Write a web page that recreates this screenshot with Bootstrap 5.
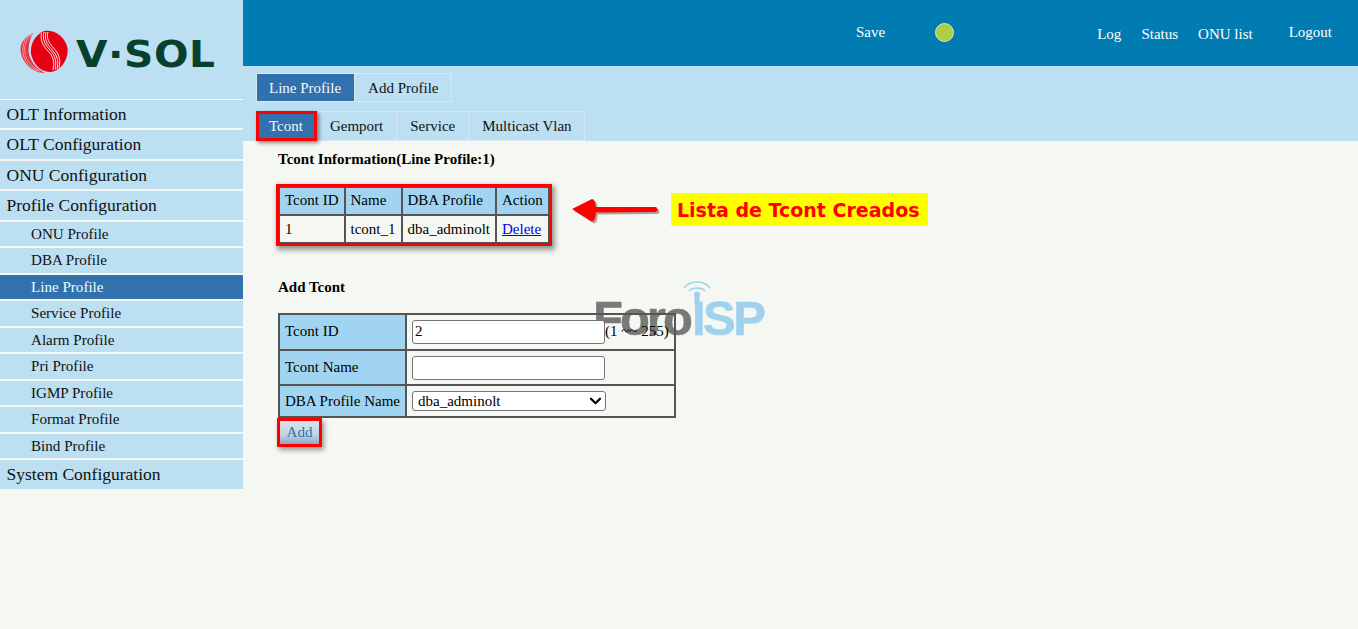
<!DOCTYPE html>
<html lang="en">
<head>
  <meta charset="UTF-8" />
  <meta name="viewport" content="width=device-width, initial-scale=1" />
  <title>V-SOL OLT - Line Profile</title>
  <link href="https://cdn.jsdelivr.net/npm/bootstrap@5.3.0/dist/css/bootstrap.min.css" rel="stylesheet" />
  <style>
    html, body { height: 100%; }
    body {
      background: #f5f8f2;
      font-family: "Liberation Serif", "Times New Roman", serif;
      font-size: 15px;
      color: #000;
      overflow: hidden;
    }
    .side-col { width: 243px; flex: none; }
    .logo-box {
      height: 98.7px;
      background: #bcdff2;
      padding: 30px 0 0 20px;
      gap: 8px;
    }
    .logo-name {
      font-family: "DejaVu Sans", sans-serif;
      font-weight: 700;
      font-size: 36px;
      line-height: 36px;
      color: #07402c;
      letter-spacing: 0.5px;
      display: inline-block;
      margin-top: 6px;
      transform: scale(1.13, 1.06);
      transform-origin: left center;
    }
    .side-menu { border-top: 1px solid #fff; width: 244px; }
    .side-item {
      display: block;
      width: 243px;
      background: #bcdff2;
      color: #111;
      text-decoration: none;
      margin-bottom: 2px;
    }
    .side-main { font-size: 17.5px; height: 28.5px; line-height: 29px; padding-left: 6.5px; }
    .side-sub { font-size: 15.1px; height: 24.5px; line-height: 24px; padding-left: 31px; }
    .side-sub.is-on { background: #3071ae; color: #f2f7fb; }
    .side-main:last-child { margin-bottom: 0; }
    .top-bar {
      height: 66px;
      background: #017cb2;
      color: #fff;
      padding: 0 26px 2px 0;
    }
    .top-bar span { white-space: nowrap; }
    .status-dot {
      width: 19px; height: 19px;
      border-radius: 50%;
      background: #a9d047;
      border: 1px solid #d5e8c0;
      margin: 0 143px 0 50px;
    }
    .top-links { padding-top: 4px; gap: 20px; margin-right: 36px; }
    .tab-zone { background: #bcdff2; height: 75px; padding: 7px 0 0 13px; }
    .tab-row { height: 29px; margin-bottom: 9px; }
    .tab-row + .tab-row { height: 30px; margin-bottom: 0; }
    .tab-cell {
      display: block;
      height: 100%;
      padding: 0 13px;
      line-height: 29px;
      color: #111;
      border: 1px solid #d6e9f3;
      border-left-width: 0;
      text-decoration: none;
      white-space: nowrap;
    }
    .tab-cell:first-child { border-left-width: 1px; padding-left: 12px; }
    .tab-cell:last-child { padding-right: 12px; }
    .tab-cell.is-on { background: #3071ae; color: #f2f7fb; }
    .mark-red {
      outline: 3px solid #f00;
      box-shadow: 2px 3px 5px 3px rgba(0,0,0,.4);
    }
    .tab-cell.mark-red { outline-offset: -3px; box-shadow: 2px 2px 4px rgba(0,0,0,.45); position: relative; }
    .work-zone { padding: 10px 0 0 35px; position: relative; flex-grow: 1; }
    .sec-title { font-size: 15px; font-weight: 700; line-height: 17px; margin: 0; }
    .sec-gap { margin-bottom: 17px; }
    .grid-table { border-collapse: collapse; }
    .grid-table td { border: 2px solid #555; padding: 0 5px; white-space: nowrap; }
    .list-table td.head-cell,
    .form-table tr:first-child td.head-cell { padding-bottom: 2px; }
    .grid-table a { color: #00e; }
    .head-cell { background: #a0d4f1; }
    .list-wrap { margin: 18px 0 0 0; display: inline-block; vertical-align: top; outline-offset: -1px; }
    .list-table td { height: 28px; }
    .form-wrap { margin-top: 35px; }
    .form-table { width: 398px; }
    .form-table .first-col { width: 127px; }
    .form-table tr:nth-child(1) td { height: 36px; }
    .form-table tr:nth-child(2) td { height: 35px; }
    .form-table tr:nth-child(3) td { height: 32px; }
    .form-table td.input-cell { padding: 0 0 0 5px; }
    .text-in {
      width: 193px; height: 24px;
      border: 1px solid #767676;
      border-radius: 3px;
      padding: 0 2px 1px;
      vertical-align: middle;
      font: inherit;
      background: #fff;
    }
    .form-select.select-in {
      width: 194px; height: 20px;
      min-height: 0;
      padding: 0 20px 0 5px;
      font: inherit;
      line-height: 17px;
      color: #000;
      border: 1px solid #767676;
      border-radius: 3px;
      background-image: url("data:image/svg+xml,%3csvg xmlns='http://www.w3.org/2000/svg' viewBox='0 0 16 16'%3e%3cpath fill='none' stroke='%23000' stroke-linecap='round' stroke-linejoin='round' stroke-width='3' d='m2 5 6 6 6-6'/%3e%3c/svg%3e");
      background-position: right 3px center;
      background-size: 13px 12px;
      vertical-align: middle;
    }
    .add-btn {
      display: block;
      width: 39px; height: 23px;
      margin: 3px 0 0 2px;
      padding: 0 0 4px;
      border: 0;
      font: inherit;
      color: #2a72b4;
      background: linear-gradient(#dbe5ee, #c2d2e0 60%, #8fa9bf);
    }
    .foro-mark {
      position: absolute;
      left: 350px; top: 139px;
      width: 175px; height: 62px;
      z-index: -1;
    }
    .foro-txt {
      position: absolute;
      left: 0; top: 13.5px;
      font-family: "Liberation Sans", Arial, sans-serif;
      font-weight: 700;
      font-size: 49px;
      line-height: 49px;
      white-space: nowrap;
      letter-spacing: -3px;
      -webkit-text-stroke: 0.5px;
    }
    .foro-grey { color: #787a78; }
    .foro-blue { color: #a0d2ee; letter-spacing: -2.5px; margin-left: 2px; }
    .foro-arcs { position: absolute; left: 86px; top: -1px; }
    .note-arrow { position: absolute; left: 326.5px; top: 56px; }
    .note-label {
      position: absolute;
      left: 428px; top: 52px;
      width: 257px; height: 33px;
      background: #ff0;
      border-radius: 1px;
      color: #f00;
      font-family: "DejaVu Sans", sans-serif;
      font-weight: 700;
      font-size: 19px;
      line-height: 34px;
      padding-left: 6px;
      white-space: nowrap;
    }
  </style>
</head>
<body>

<div class="d-flex h-100">
  <!-- Left menu -->
  <div class="side-col">
    <div class="logo-box d-flex align-items-start">
      <svg width="48" height="45" viewBox="0 0 48 45" aria-hidden="true">
        <path d="M24 1 C34 -1 45 6 47.5 18 C49 30 40 41 30 42 C20 42 13 33 11 24 C10 14 15 5 24 1 Z" fill="#e60012"/>
        <path d="M13 3 C5 7 0 13 0.5 20 C1.5 32 12 43 25 43 C16 39 9 30 8.5 21 C8.5 14 10 8 13 3 Z" fill="#e8303e"/>
        <g fill="none" stroke="#f9b9bd" stroke-width=".8">
          <path d="M11 4 C4 9 2 16 3 23 C4 31 10 38 18 41"/>
          <path d="M12 4 C6 10 4 16 5 23 C6 30 11 36 20 41.5"/>
        </g>
        <g fill="none" stroke="#fde3e5" stroke-width="1">
          <path d="M21.5 3 C20 10 23 16 28 21 C33 26 35 32 33 40"/>
          <path d="M24 2 C22 9 25 15 30 20 C35 25 37 32 35 39.5"/>
          <path d="M26 2 C24 9 27 14 32 19.5 C37 25 39 31 37 39"/>
          <path d="M28 2 C26 8 29 13 34 18.5 C39 24 41 30 39 37.5"/>
        </g>
      </svg>
      <span class="logo-name">V·SOL</span>
    </div>
    <div class="side-menu">
      <a class="side-item side-main" href="#">OLT Information</a>
      <a class="side-item side-main" href="#">OLT Configuration</a>
      <a class="side-item side-main" href="#">ONU Configuration</a>
      <a class="side-item side-main" href="#">Profile Configuration</a>
      <a class="side-item side-sub" href="#">ONU Profile</a>
      <a class="side-item side-sub" href="#">DBA Profile</a>
      <a class="side-item side-sub is-on" href="#">Line Profile</a>
      <a class="side-item side-sub" href="#">Service Profile</a>
      <a class="side-item side-sub" href="#">Alarm Profile</a>
      <a class="side-item side-sub" href="#">Pri Profile</a>
      <a class="side-item side-sub" href="#">IGMP Profile</a>
      <a class="side-item side-sub" href="#">Format Profile</a>
      <a class="side-item side-sub" href="#">Bind Profile</a>
      <a class="side-item side-main" href="#">System Configuration</a>
    </div>
  </div>

  <!-- Right side -->
  <div class="flex-grow-1 d-flex flex-column">
    <div class="top-bar d-flex align-items-center justify-content-end">
      <span>Save</span>
      <div class="status-dot"></div>
      <div class="top-links d-flex">
        <span>Log</span>
        <span>Status</span>
        <span>ONU list</span>
      </div>
      <span>Logout</span>
    </div>

    <div class="tab-zone">
      <div class="tab-row d-flex">
        <a class="tab-cell is-on" href="#">Line Profile</a>
        <a class="tab-cell" href="#">Add Profile</a>
      </div>
      <div class="tab-row d-flex">
        <a class="tab-cell is-on mark-red" href="#">Tcont</a>
        <a class="tab-cell" href="#">Gemport</a>
        <a class="tab-cell" href="#">Service</a>
        <a class="tab-cell" href="#">Multicast Vlan</a>
      </div>
    </div>

    <div class="work-zone">
      <h6 class="sec-title">Tcont Information(Line Profile:1)</h6>
      <div class="list-wrap mark-red">
        <table class="grid-table list-table">
          <tr>
            <td class="head-cell">Tcont ID</td>
            <td class="head-cell">Name</td>
            <td class="head-cell">DBA Profile</td>
            <td class="head-cell">Action</td>
          </tr>
          <tr>
            <td>1</td>
            <td>tcont_1</td>
            <td>dba_adminolt</td>
            <td><a href="#">Delete</a></td>
          </tr>
        </table>
      </div>

      <div class="form-wrap">
        <h6 class="sec-title sec-gap">Add Tcont</h6>
        <table class="grid-table form-table">
          <tr>
            <td class="head-cell first-col">Tcont ID</td>
            <td class="input-cell"><input class="text-in" type="text" value="2" />(1 ~~ 255)</td>
          </tr>
          <tr>
            <td class="head-cell first-col">Tcont Name</td>
            <td class="input-cell"><input class="text-in" type="text" /></td>
          </tr>
          <tr>
            <td class="head-cell first-col">DBA Profile Name</td>
            <td class="input-cell"><select class="form-select select-in"><option>dba_adminolt</option></select></td>
          </tr>
        </table>
        <button type="button" class="add-btn mark-red">Add</button>
      </div>

      <!-- Watermark sits under the page content -->
      <div class="foro-mark">
        <svg class="foro-arcs" width="36" height="26" viewBox="0 0 36 26" aria-hidden="true">
          <g fill="none" stroke="#9ed0ee" stroke-width="1.4">
            <path d="M5 9 C11 1 25 1 31 9"/>
            <path d="M10 12 C14 8 22 8 26 12"/>
          </g>
          <circle cx="18" cy="15.5" r="3" fill="#9ed0ee"/>
          <rect x="15.5" y="16" width="5" height="10" fill="#9ed0ee"/>
        </svg>
        <div class="foro-txt"><span class="foro-grey">Foro</span><span class="foro-blue">ISP</span></div>
      </div>

      <!-- Annotation -->
      <svg class="note-arrow" width="95" height="30" viewBox="0 0 95 30" aria-hidden="true">
        <path d="M2 12 L22 2 Q24 2 25 5 L26 10 L86 10 Q89 12.5 86 15 L26 15.5 L25 21 Q24 25 21 24 Z" fill="#555" opacity=".5" transform="translate(2 2)"/>
        <path d="M2 12 L22 2 Q24 2 25 5 L26 10 L86 10 Q89 12.5 86 15 L26 15.5 L25 21 Q24 25 21 24 Z" fill="#f00"/>
      </svg>
      <div class="note-label">Lista de Tcont Creados</div>
    </div>
  </div>
</div>

<script src="https://cdn.jsdelivr.net/npm/bootstrap@5.3.0/dist/js/bootstrap.bundle.min.js"></script>
</body>
</html>
